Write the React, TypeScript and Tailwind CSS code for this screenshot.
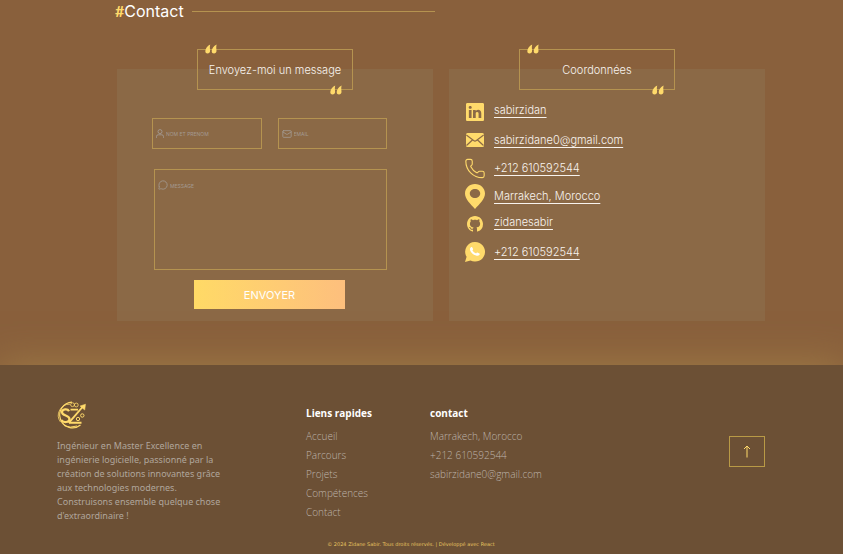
import type { ReactNode } from 'react';
import { BsGithub, BsLinkedin } from 'react-icons/bs';
import { Mail, MessageCircle, Phone } from 'lucide-react';

function EnvelopeIcon() {
  return (
    <svg width="18" height="14" viewBox="0 0 18 14" aria-hidden="true">
      <rect width="18" height="14" rx="1.5" fill="currentColor" />
      <path d="M.3 2 7.600 7.600Q9 8.600 10.400 7.600L17.700 2M.5 12.500 6.400 7M17.500 12.500 11.600 7" fill="none" stroke="#8b6946" strokeWidth="1.200" />
    </svg>
  );
}

function PinIcon() {
  return (
    <svg width="20" height="25" viewBox="0 0 20 25" aria-hidden="true">
      <path
        d="M10 0C4.400 0 0 4.200 0 9.400c0 5.600 5.400 10.200 10 15.600 4.600-5.400 10-10 10-15.600C20 4.200 15.600 0 10 0Zm0 5c2.900 0 5.200 2 5.200 4.500S12.900 14 10 14s-5.200-2-5.200-4.500S7.100 5 10 5Z"
        fill="currentColor"
        fillRule="evenodd"
      />
    </svg>
  );
}

function WhatsAppIcon() {
  return (
    <svg width="20" height="20" viewBox="0 0 20 20" aria-hidden="true">
      <path d="M10.200 0a9.800 9.800 0 1 1-4.700 18.400L0 20l1.600-5.200A9.800 9.800 0 0 1 10.200 0Z" fill="currentColor" />
      <path
        d="M6 5.200c.4-.4 1-.3 1.200.1l.9 1.700c.2.500-.4 1-.7 1.300.8 1.500 2 2.500 3.700 3.200.4-.4.800-1.100 1.300-.9l2 .9c.5.300.4.900.1 1.300-.8 1-2.200 1.100-3.500.7-3-.9-5-2.800-5.900-5.300-.4-1.200 0-2.300.9-3Z"
        fill="#fff"
      />
    </svg>
  );
}

function PersonIcon() {
  return (
    <svg width="8" height="9" viewBox="0 0 8 9" fill="none" stroke="currentColor" strokeWidth="0.9" className="shrink-0" aria-hidden="true">
      <circle cx="4" cy="2.600" r="2" />
      <path d="M.5 8.800V7.400Q.5 5.800 2.300 5.800H5.700Q7.500 5.800 7.500 7.400V8.800" />
    </svg>
  );
}

function Logo() {
  return (
    <svg width="30" height="29" viewBox="1 0 30 29" fill="none" stroke="currentColor" role="img" aria-label="SZ">
      <path d="M16 1.200A12.800 12.800 0 1 0 24.500 24" strokeWidth="1.200" />
      <path d="M14 3.200A11.200 11.200 0 0 0 4.500 21" strokeWidth=".8" />
      <path d="M13 10.200C11.800 7.600 6 7.800 6 11.300c0 3.700 7.500 2.900 7.500 6.700 0 3.700-6 4-8 1" strokeWidth="2.200" />
      <path d="M14.500 8.600H22M13 21.800H25.500" strokeWidth="1.900" />
      <path d="M12.800 21.800 26.500 6" strokeWidth="1.900" />
      <path d="m24 5 5.500-1.800L28.700 9Z" fill="currentColor" strokeWidth=".5" />
      <circle cx="16.500" cy="3.700" r="1.900" strokeWidth=".8" />
      <circle cx="20.300" cy="4" r="1.900" strokeWidth=".8" />
      <circle cx="22" cy="18" r="1.700" strokeWidth="1" />
      <circle cx="26.300" cy="14.500" r="1.700" strokeWidth="1" />
      <path d="M8 24.500Q14 27.500 21 25M5 18.500l3 3" strokeWidth="1" />
    </svg>
  );
}

function QuoteOrnament({ className }: { className: string }) {
  return (
    <svg width="12" height="10" viewBox="0 0 12 9" fill="currentColor" aria-hidden="true" className={`absolute text-[#ffda6b] ${className}`}>
      <path d="M5.200 0C2.300 1.400.2 4.300.3 6.800c.1 1.400.9 2.200 2.300 2.200 1.400 0 2.500-.9 2.500-2.400C5.100 4.400 4.500 3 5.200 0Z" />
      <path d="M11.600 0C8.700 1.400 6.600 4.300 6.700 6.800c.1 1.400.9 2.200 2.300 2.200 1.400 0 2.500-.9 2.500-2.400 0-2.200-.6-3.600.1-6.600Z" />
    </svg>
  );
}

function PanelTitle({ children }: { children: ReactNode }) {
  return (
    <div className="relative -mt-5 flex h-[41px] w-[156px] items-center justify-center border border-[#b59350]">
      <QuoteOrnament className="-top-1.5 left-[7px]" />
      <h3 className="text-[11px] leading-4 font-light text-[#f8f3ee]">{children}</h3>
      <QuoteOrnament className="right-2.5 -bottom-1.5" />
    </div>
  );
}

const coordinates = [
  { icon: <BsLinkedin size={18} />, label: 'sabirzidan', href: '#linkedin', handle: true },
  { icon: <EnvelopeIcon />, label: 'sabirzidane0@gmail.com', href: 'mailto:sabirzidane0@gmail.com' },
  { icon: <Phone size={25} strokeWidth={1.2} />, label: '+212 610592544', href: 'tel:+212610592544' },
  { icon: <PinIcon />, label: 'Marrakech, Morocco', href: '#map' },
  { icon: <BsGithub size={16} />, label: 'zidanesabir', href: '#github', handle: true },
  { icon: <WhatsAppIcon />, label: '+212 610592544', href: '#whatsapp' },
];

const quickLinks = ['Accueil', 'Parcours', 'Projets', 'Compétences', 'Contact'];
const footerContacts = [
  { label: 'Marrakech, Morocco', href: '#map' },
  { label: '+212 610592544', href: 'tel:+212610592544' },
  { label: 'sabirzidane0@gmail.com', href: 'mailto:sabirzidane0@gmail.com' },
];

const fieldText = 'bg-transparent text-[5px] leading-3 text-white outline-none placeholder:text-[#a49a92] placeholder:opacity-100';

export default function App() {
  return (
    <div className="flex min-h-screen flex-col bg-[#89603c] font-['Inter',sans-serif]">
      <main className="pr-[78px] pb-11 pl-[117px]">
        <div className="-ml-0.5 flex h-[22px] w-1/2 items-center gap-2 pr-1">
          <h2 className="text-base leading-6 whitespace-nowrap text-white">
            <span className="font-['Lato'] font-bold text-[#ffda6b]">#</span>Contact
          </h2>
          <div className="h-px flex-1 bg-[#b59350]" />
        </div>

        <div className="mt-[47px] grid grid-cols-2 gap-4">
          <section className="flex flex-col items-center bg-[#8b6946] pb-3">
            <PanelTitle>Envoyez-moi un message</PanelTitle>
            <form className="mt-7 flex w-full flex-col items-center pr-[46px] pl-[35px]" onSubmit={(e) => e.preventDefault()}>
              <div className="grid w-full grid-cols-2 gap-4">
                <label className="flex h-[31px] items-center gap-0.5 border border-[#b59350] pl-[3px] text-[#a49a92]">
                  <PersonIcon />
                  <input type="text" aria-label="Nom et prénom" placeholder="NOM ET PRENOM" className={`w-full min-w-0 ${fieldText}`} />
                </label>
                <label className="flex h-[31px] items-center gap-0.5 border border-[#b59350] pl-[3px] text-[#a49a92]">
                  <Mail size={10} strokeWidth={2} className="shrink-0" />
                  <input type="email" aria-label="Email" placeholder="EMAIL" className={`w-full min-w-0 ${fieldText}`} />
                </label>
              </div>
              <div className="mt-5 w-full pl-0.5">
                <label className="flex h-[101px] items-start gap-0.5 border border-[#b59350] pt-2.5 pl-[3px] text-[#a49a92]">
                  <MessageCircle size={10} strokeWidth={2} className="shrink-0" />
                  <textarea aria-label="Message" placeholder="MESSAGE" className={`h-full w-full resize-none ${fieldText}`} />
                </label>
              </div>
              <button type="submit" className="mt-2.5 h-[29px] w-[151px] bg-linear-to-r from-[#ffda66] to-[#fdbf7d] text-[11px] leading-4 text-white">
                ENVOYER
              </button>
            </form>
          </section>

          <section className="flex flex-col items-center bg-[#8b6946]">
            <div className="pr-5">
              <PanelTitle>Coordonnées</PanelTitle>
            </div>
            <ul className="mt-2 w-full pl-[15px]">
              {coordinates.map(({ icon, label, href, handle }) => (
                <li key={href} className="flex h-7 items-center gap-2">
                  <span className="flex w-[22px] shrink-0 justify-center text-[#ffda6b]">{icon}</span>
                  <a
                    href={href}
                    className={`text-[11px] leading-4 font-light text-[#f8f3ee] underline decoration-1 underline-offset-[3px] ${handle ? 'pb-1' : ''}`}
                  >
                    {label}
                  </a>
                </li>
              ))}
            </ul>
          </section>
        </div>
      </main>

      <footer className="flex flex-1 flex-col bg-[#6c5035] pr-[78px] pl-[57px] font-['Open_Sans',sans-serif] text-[10px] font-light text-[#bdb3aa] shadow-[0_0_36px_#a07c46]">
        <div className="flex pt-9">
          <div className="w-[249px] shrink-0 text-[#ffda6b]">
            <Logo />
            <p className="mt-[9px] w-[168px] font-['Noto_Sans'] text-[9px] leading-[14px] font-normal text-[#b0a69c]">
              Ingénieur en Master Excellence en ingénierie logicielle, passionné par la création de solutions innovantes grâce aux
              technologies modernes. Construisons ensemble quelque chose d'extraordinaire !
            </p>
          </div>
          <nav aria-labelledby="quick-links" className="w-[124px] shrink-0 pt-1">
            <h4 id="quick-links" className="mb-1.5 leading-4 font-bold text-white">Liens rapides</h4>
            <ul>
              {quickLinks.map((link) => (
                <li key={link} className="leading-[19px]">
                  <a href={`#${link.toLowerCase()}`}>{link}</a>
                </li>
              ))}
            </ul>
          </nav>
          <div className="pt-1">
            <h4 className="mb-1.5 leading-4 font-bold text-white">contact</h4>
            <ul>
              {footerContacts.map(({ label, href }) => (
                <li key={label} className="leading-[19px]">
                  <a href={href}>{label}</a>
                </li>
              ))}
            </ul>
          </div>
          <button
            type="button"
            aria-label="Retour en haut"
            className="mt-[35px] ml-auto flex h-[31px] w-9 items-center justify-center border border-[#b99a46] text-[#ffda6b]"
          >
            <svg width="8" height="13" viewBox="0 0 8 13" fill="none" stroke="currentColor" aria-hidden="true">
              <path d="M4 12.500V1M1 4 4 1 7 4" />
            </svg>
          </button>
        </div>
        <p className="mt-[15px] text-center font-['DejaVu_Sans'] text-[5px] leading-3 font-normal text-[#e6c461]">
          © 2024 Zidane Sabir. Tous droits réservés. | Développé avec React
        </p>
      </footer>
    </div>
  );
}
